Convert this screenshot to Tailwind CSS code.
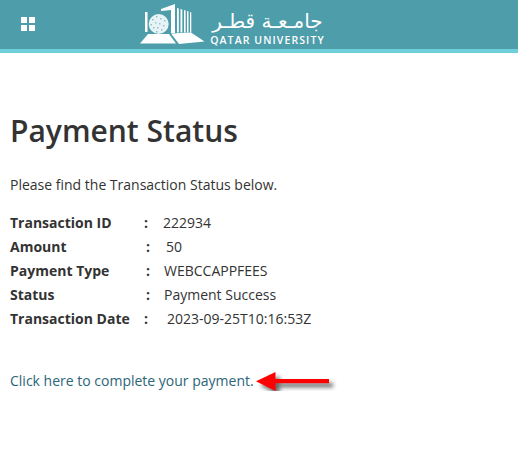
<!DOCTYPE html>
<html lang="en">
<head>
  <meta charset="UTF-8" />
  <title>Payment Status</title>
  <script src="https://cdn.jsdelivr.net/npm/@tailwindcss/browser@4"></script>
</head>
<body class="bg-white font-['Open_Sans',sans-serif] text-[14px] text-[#333]">
  <!-- Header -->
  <header class="relative flex h-[53px] items-start border-b-4 border-[#6fcfdb] bg-[#4d9dab]">
    <div class="mt-[17px] ml-[21px] grid grid-cols-2 gap-[2px]">
      <span class="size-[6px] bg-white"></span>
      <span class="size-[6px] bg-white"></span>
      <span class="size-[6px] bg-white"></span>
      <span class="size-[6px] bg-white"></span>
    </div>
    <!-- Logo -->
    <svg class="absolute top-0 left-[136px]" width="70" height="48" viewBox="136 0 70 48" fill="#fff">
      <path d="M140 43.500 L148 34 H169 L176 43.500 Z" />
      <path d="M171 33.500 L191 32.500 L204.500 41.500 L179 44 Z" />
      <path d="M145 12 H147.500 V32 H145 Z" />
      <path d="M161 9 L175 4 V33 H171 V10 L161 11 Z" />
      <path d="M177 8 l1.800 .4 v24 h-1.800z M180.500 9 l1.800 .4 v23 h-1.800z M184 10 l1.600 .4 v22 h-1.600z M187 11 l1.500 .4 v21 h-1.500z M190 12 l1.300 .4 v20 h-1.300z" />
      <circle cx="158.700" cy="24" r="10" fill="#e8f3f5" />
      <path d="M152 19h1.500v1.500h-1.500z M156 16h1.500v1.500h-1.500z M160 18h1.500v1.500h-1.500z M164 20h1.500v1.500h-1.500z M150.500 24h1.500v1.500h-1.500z M155 22h1.500v1.500h-1.500z M159 23h1.500v1.500h-1.500z M163 25h1.500v1.500h-1.500z M153 27h1.500v1.500h-1.500z M157 27h1.500v1.500h-1.500z M161 29h1.500v1.500h-1.500z M156 31h1.500v1.500h-1.500z" fill="#8fc3cc" />
    </svg>
    <div class="absolute top-[9px] left-[210px] flex w-[115px] flex-col items-center">
      <span dir="rtl" lang="ar" class="h-[24px] font-['DejaVu_Sans',sans-serif] text-[20px] leading-[24px] whitespace-nowrap text-white">جامـعـة قطـر</span>
      <span class="text-[10.500px] leading-[14px] font-semibold tracking-[1.100px] whitespace-nowrap text-white">QATAR UNIVERSITY</span>
    </div>
  </header>

  <main class="px-[10px]">
    <h1 class="mt-[58px] text-[30px] leading-[40px] font-semibold text-[#333]">Payment Status</h1>
    <p class="mt-[24px] leading-[20px]">Please find the Transaction Status below.</p>

    <div class="mt-[15px] flex flex-col">
      <div class="flex h-[24px] items-center">
        <span class="w-[134px] font-bold">Transaction ID</span><span class="w-[19px] font-bold">:</span><span>222934</span>
      </div>
      <div class="flex h-[24px] items-center">
        <span class="w-[136px] font-bold">Amount</span><span class="w-[20px] font-bold">:</span><span>50</span>
      </div>
      <div class="flex h-[24px] items-center">
        <span class="w-[136px] font-bold">Payment Type</span><span class="w-[18px] font-bold">:</span><span>WEBCCAPPFEES</span>
      </div>
      <div class="flex h-[24px] items-center">
        <span class="w-[136px] font-bold">Status</span><span class="w-[18px] font-bold">:</span><span>Payment Success</span>
      </div>
      <div class="flex h-[24px] items-center">
        <span class="w-[134px] font-bold">Transaction Date</span><span class="w-[23px] font-bold">:</span><span>2023-09-25T10:16:53Z</span>
      </div>
    </div>

    <div class="relative mt-[40px]">
      <a href="#" class="leading-[20px] text-[#2b6578]">Click here to complete your payment.</a>
      <svg class="absolute top-[-6px] left-[240px] drop-shadow-[4px_4px_2px_rgba(0,0,0,0.6)]" width="90" height="35" viewBox="250 365 90 35">
        <path d="M256 382.300 L275.500 373 V380 H329 V384.300 H275.500 V392 Z" fill="#f00" />
      </svg>
    </div>
  </main>
</body>
</html>
